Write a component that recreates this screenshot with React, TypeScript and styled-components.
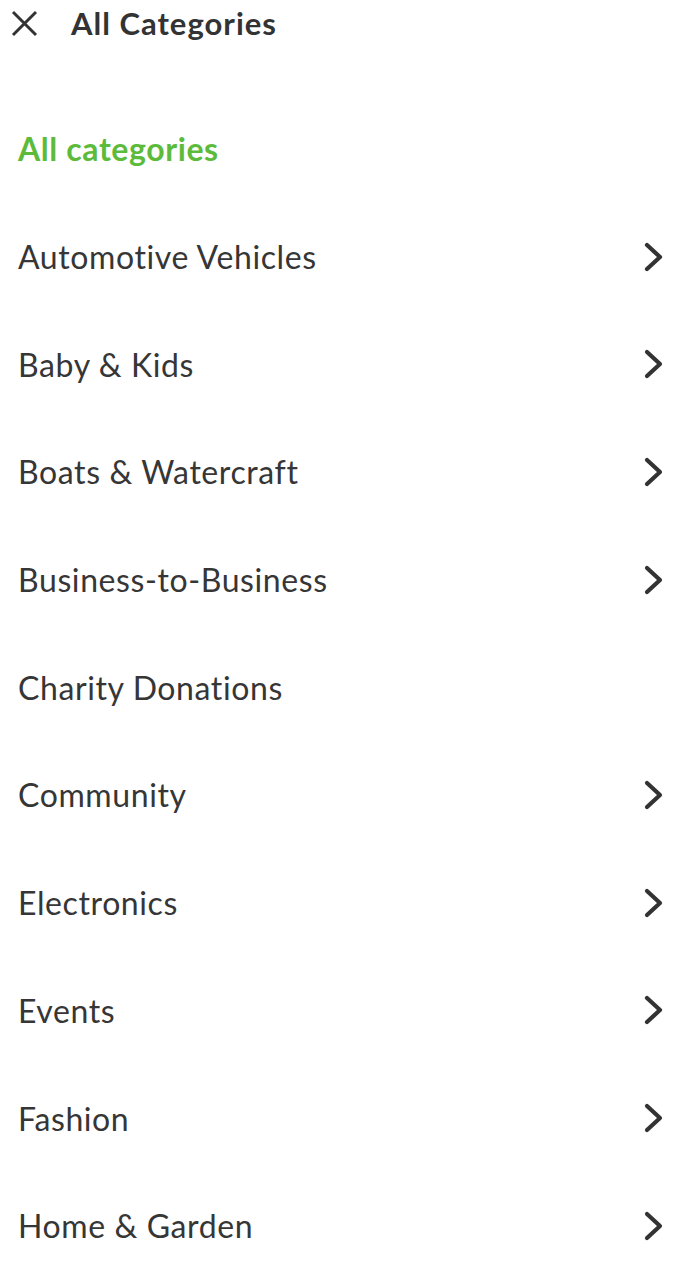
import React from "react";
import styled, { createGlobalStyle } from "styled-components";

const Global = createGlobalStyle`
  html, body { margin: 0; padding: 0; background: #ffffff; }
  body { font-family: Lato, "Open Sans", sans-serif; color: #333333; font-variant-ligatures: none; }
`;

const Page = styled.div`
  width: 698px;
  min-height: 1264px;
  background: #fff;
  overflow: hidden;
`;

const Header = styled.header`
  display: flex;
  align-items: center;
  height: 46px;
  padding-left: 10px;
  gap: 32px;
`;

const CloseButton = styled.button`
  display: flex;
  align-items: center;
  justify-content: center;
  width: 29px;
  height: 29px;
  padding: 0;
  border: 0;
  background: none;
  color: #333;
`;

const Title = styled.h1`
  margin: 0;
  font-family: Lato, sans-serif;
  font-weight: 700;
  font-size: 31px;
  letter-spacing: 1px;
  font-variant-ligatures: none;
  color: #333333;
`;

const List = styled.ul`
  list-style: none;
  margin: 49px 0 0;
  padding: 0;
`;

const Row = styled.li<{ $active?: boolean }>`
  display: flex;
  align-items: center;
  justify-content: space-between;
  height: 107.7px;
  padding: 0 31px 0 18px;
  font-family: Lato, sans-serif;
  font-size: 32px;
  letter-spacing: 0.6px;
  font-variant-ligatures: none;
  font-weight: ${(p) => (p.$active ? 700 : 400)};
  color: ${(p) => (p.$active ? "#5dbb3b" : "#363636")};
`;

const Chevron = () => (
  <svg width="24" height="30" viewBox="0 0 24 30" fill="none">
    <path d="M4 3 L17 15 L4 27" stroke="#333" strokeWidth="4.2" strokeLinecap="round" strokeLinejoin="round" />
  </svg>
);

const CloseIcon = () => (
  <svg width="29" height="29" viewBox="0 0 29 29" fill="none">
    <path d="M3 3 L26 26 M26 3 L3 26" stroke="#333" strokeWidth="3" />
  </svg>
);

const categories: { name: string; sub: boolean }[] = [
  { name: "Automotive Vehicles", sub: true },
  { name: "Baby & Kids", sub: true },
  { name: "Boats & Watercraft", sub: true },
  { name: "Business-to-Business", sub: true },
  { name: "Charity Donations", sub: false },
  { name: "Community", sub: true },
  { name: "Electronics", sub: true },
  { name: "Events", sub: true },
  { name: "Fashion", sub: true },
  { name: "Home & Garden", sub: true },
];

export default function App() {
  return (
    <Page>
      <Global />
      <Header>
        <CloseButton aria-label="Close">
          <CloseIcon />
        </CloseButton>
        <Title>All Categories</Title>
      </Header>
      <List>
        <Row $active>All categories</Row>
        {categories.map((c) => (
          <Row key={c.name}>
            <span>{c.name}</span>
            {c.sub && <Chevron />}
          </Row>
        ))}
      </List>
    </Page>
  );
}
